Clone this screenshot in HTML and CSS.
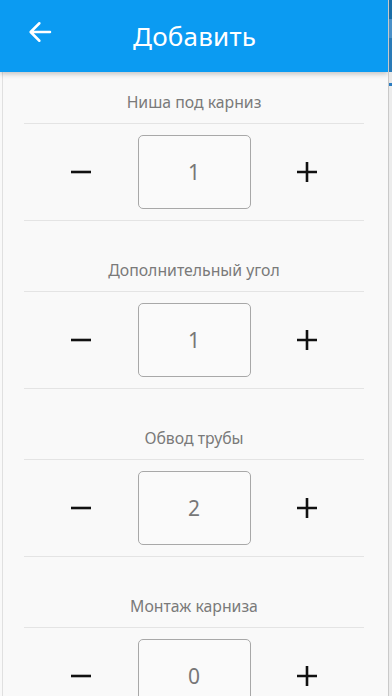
FILE: index.html
```html
<!DOCTYPE html>
<html lang="ru">
<head>
<meta charset="utf-8">
<link rel="stylesheet" href="styles.css">
</head>
<body>
<div class="screen">
  <div class="main">
    <header class="appbar">
      <svg class="back" viewBox="0 0 24 24" width="30" height="30"><path d="M20 12H5M11.5 5L4.5 12l7 7" fill="none" stroke="#fff" stroke-width="2" stroke-linecap="round" stroke-linejoin="round"/></svg>
      <h1 class="title">Добавить</h1>
    </header>
    <div class="content">
      <section class="item">
        <div class="label">Ниша под карниз</div>
        <div class="row">
          <button class="btn"><svg viewBox="0 0 20 20" width="20" height="20"><path d="M0 10H20" stroke="#111" stroke-width="2.6"/></svg></button>
          <div class="box">1</div>
          <button class="btn"><svg viewBox="0 0 20 20" width="20" height="20"><path d="M0 10H20M10 0V20" stroke="#111" stroke-width="2.6"/></svg></button>
        </div>
      </section>
      <section class="item">
        <div class="label">Дополнительный угол</div>
        <div class="row">
          <button class="btn"><svg viewBox="0 0 20 20" width="20" height="20"><path d="M0 10H20" stroke="#111" stroke-width="2.6"/></svg></button>
          <div class="box">1</div>
          <button class="btn"><svg viewBox="0 0 20 20" width="20" height="20"><path d="M0 10H20M10 0V20" stroke="#111" stroke-width="2.6"/></svg></button>
        </div>
      </section>
      <section class="item">
        <div class="label">Обвод трубы</div>
        <div class="row">
          <button class="btn"><svg viewBox="0 0 20 20" width="20" height="20"><path d="M0 10H20" stroke="#111" stroke-width="2.6"/></svg></button>
          <div class="box">2</div>
          <button class="btn"><svg viewBox="0 0 20 20" width="20" height="20"><path d="M0 10H20M10 0V20" stroke="#111" stroke-width="2.6"/></svg></button>
        </div>
      </section>
      <section class="item">
        <div class="label">Монтаж карниза</div>
        <div class="row">
          <button class="btn"><svg viewBox="0 0 20 20" width="20" height="20"><path d="M0 10H20" stroke="#111" stroke-width="2.6"/></svg></button>
          <div class="box">0</div>
          <button class="btn"><svg viewBox="0 0 20 20" width="20" height="20"><path d="M0 10H20M10 0V20" stroke="#111" stroke-width="2.6"/></svg></button>
        </div>
      </section>
    </div>
  </div>
  <div class="edge"><div class="edge-top"></div></div>
</div>
</body>
</html>
```
FILE: styles.css
```css
* { box-sizing: border-box; }
html, body { margin: 0; padding: 0; height: 100%; overflow: hidden; }
body {
  font-family: "Noto Sans", "Open Sans", sans-serif;
  background: #f9f9f9;
}
.screen {
  display: flex;
  height: 696px;
  overflow: hidden;
}
.main {
  width: 388px;
  display: flex;
  flex-direction: column;
  background: #f9f9f9;
  overflow: hidden;
}
.edge {
  width: 4px;
  background: #ececec;
  border-left: 1px solid #c9c9c9;
}
.edge-top {
  height: 96px;
  background: linear-gradient(#1a6ea8 0 20%, #4a90c8 20% 40%, #2a7bb8 40% 75%, #e8e8e8 75% 86%, #2b7cc0 86% 90%, #ececec 90%);
}
.appbar {
  flex-shrink: 0;
  height: 72px;
  background: #0b9bf2;
  display: flex;
  align-items: center;
  position: relative;
  box-shadow: 0 2px 5px rgba(0,0,0,0.22);
  z-index: 1;
}
.back {
  margin-left: 25px;
  margin-top: -8px;
}
.title {
  margin: 0 0 0 78px;
  margin-top: -1px;
  color: #fff;
  font-weight: 400;
  font-size: 26px;
  letter-spacing: 0.2px;
}
.content {
  flex: 1 0 auto;
  margin-left: 2px;
  border-left: 1px solid #e0e0e0;
  padding: 19px 24px 0 21px;
}
.item { margin-bottom: 38px; }
.label {
  text-align: center;
  font-size: 15.8px;
  line-height: 22px;
  color: #7a7a7a;
  padding-bottom: 10px;
  border-bottom: 1px solid #e4e4e4;
}
.row {
  display: grid;
  grid-template-columns: 1fr 113px 1fr;
  align-items: center;
  height: 97px;
  border-bottom: 1px solid #e4e4e4;
}
.btn {
  border: 0;
  background: none;
  padding: 0;
  justify-self: center;
  display: flex;
}
.box {
  height: 74px;
  border: 1.5px solid #a8a8a8;
  border-radius: 5px;
  display: flex;
  align-items: center;
  justify-content: center;
  font-size: 21px;
  color: #777;
  background: #fafafa;
}
```
